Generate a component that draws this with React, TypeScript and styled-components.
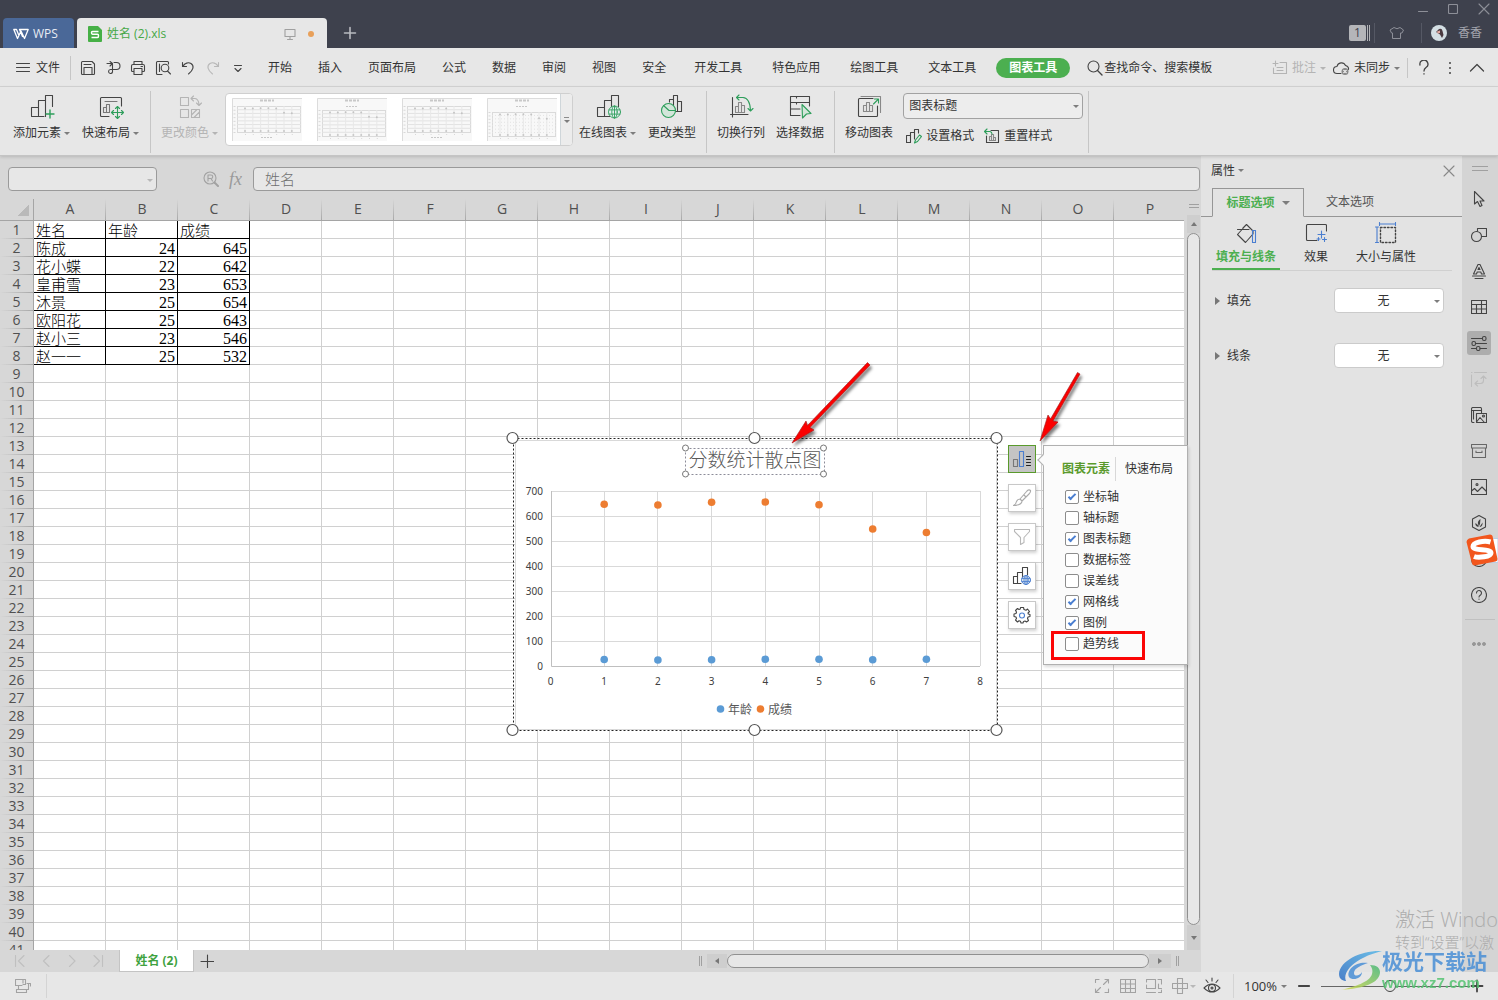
import React from "react";
import styled, { createGlobalStyle, css } from "styled-components";

const ink = "#333333";
const green = "#4caf50";
const ui = `"Open Sans", "Noto Sans CJK SC", sans-serif`;

const Global = createGlobalStyle`
  *, *::before, *::after { box-sizing: border-box; }
  body { margin: 0; background: #e7e7e7; font-family: ${ui}; font-size: 12px; line-height: 16px; color: ${ink}; }
  button, input, select { font: inherit; color: inherit; margin: 0; padding: 0; }
  button { background: none; border: 0; white-space: nowrap; cursor: pointer; }
  svg { display: block; flex: none; }
`;

/* ---------- shared pieces ---------- */

const App = styled.div`
  position: relative;
  display: flex;
  flex-direction: column;
  height: 100vh;
  overflow: hidden;
`;

const Spacer = styled.div`
  flex: 1;
`;

const Caret = styled.i<{ $color?: string; $size?: number }>`
  flex: none;
  width: 0;
  height: 0;
  border: ${(p) => p.$size ?? 3}px solid transparent;
  border-bottom-width: 0;
  border-top-color: ${(p) => p.$color ?? "#7d7d7d"};
`;

const VLine = styled.span<{ $h: number; $color?: string }>`
  flex: none;
  width: 1px;
  height: ${(p) => p.$h}px;
  background: ${(p) => p.$color ?? "#c6c6c6"};
`;

type IconProps = {
  w?: number;
  h?: number;
  color?: string;
  children: React.ReactNode;
};

function Icon({ w = 16, h = 16, color = "#444", children }: IconProps) {
  return (
    <svg
      width={w}
      height={h}
      viewBox={`0 0 ${w} ${h}`}
      fill="none"
      stroke={color}
      strokeWidth="1.1"
      strokeLinecap="round"
      strokeLinejoin="round"
      aria-hidden="true"
    >
      {children}
    </svg>
  );
}

/* ---------- title bar ---------- */

const TitleBar = styled.header`
  flex: none;
  display: flex;
  align-items: flex-end;
  height: 48px;
  padding-left: 3px;
  background: #3e414d;
`;

const HomeTab = styled.button`
  display: flex;
  align-items: center;
  gap: 4px;
  width: 71px;
  height: 30px;
  padding: 2px 0 0 10px;
  border-radius: 4px 4px 0 0;
  background: #4a6898;
  color: #e8ecf4;
`;

const DocTab = styled.div`
  display: flex;
  align-items: center;
  width: 250px;
  height: 30px;
  margin-left: 3px;
  padding: 2px 13px 0 11px;
  border-radius: 4px 4px 0 0;
  background: #e7e7e7;
  color: #46a846;
`;

const DocName = styled.span`
  margin-left: 5px;
`;

const UnsavedDot = styled.span`
  width: 6px;
  height: 6px;
  margin-left: 12px;
  border-radius: 50%;
  background: #e8a05a;
`;

const NewTab = styled.button`
  display: grid;
  place-items: center;
  width: 46px;
  height: 30px;
`;

const TitleRight = styled.div`
  align-self: stretch;
  display: flex;
  flex-direction: column;
  align-items: flex-end;
`;

const WindowButtons = styled.div`
  display: flex;
  align-items: center;
  gap: 20px;
  height: 18px;
  padding-right: 8px;
`;

const Account = styled.div`
  display: flex;
  align-items: center;
  height: 29px;
  padding-right: 16px;
  color: #a3a5ad;
`;

const CountBadge = styled.span`
  width: 17px;
  margin-right: 1px;
  border-radius: 2px;
  background: #b4b5b9;
  color: #3e414d;
  text-align: center;
`;

const BadgeStripes = styled.span`
  width: 3px;
  height: 16px;
  margin-right: 4px;
  border: solid #b4b5b9;
  border-width: 0 1px;
`;

/* ---------- menu bar ---------- */

const MenuBar = styled.nav`
  flex: none;
  display: flex;
  align-items: center;
  height: 39px;
  padding-top: 2px;
  border-bottom: 1px solid #d4d4d4;
  background: #e7e7e7;
`;

const FileButton = styled.button`
  display: flex;
  align-items: center;
  gap: 6px;
  height: 24px;
  margin: 0 10px 0 16px;
`;

const QuickTools = styled.div`
  display: flex;
  align-items: center;
  gap: 9px;
  margin: 0 22px 0 9px;
`;

const MenuGroup = styled.div<{ $gap: number; $after: number }>`
  display: flex;
  gap: ${(p) => p.$gap}px;
  margin-right: ${(p) => p.$after}px;
`;

const ActiveMenu = styled.button`
  height: 20px;
  margin-right: 17px;
  padding: 0 13px;
  border-radius: 10px;
  background: ${green};
  color: #fff;
  font-weight: 700;
`;

const MenuAction = styled.button<{ $dim?: boolean; $gap?: number }>`
  display: flex;
  align-items: center;
  gap: ${(p) => p.$gap ?? 4}px;
  color: ${(p) => (p.$dim ? "#b4b4b4" : ink)};
`;

const MenuRight = styled.div`
  display: flex;
  align-items: center;
  gap: 7px;
  margin-left: auto;
  padding-right: 13px;
`;

const MenuEndIcons = styled.div`
  display: flex;
  align-items: center;
  gap: 12px;
  padding-left: 2px;
`;

/* ---------- ribbon ---------- */

const Ribbon = styled.section`
  position: relative;
  z-index: 1;
  flex: none;
  display: flex;
  align-items: flex-start;
  height: 69px;
  padding: 6px 0 0 13px;
  border-bottom: 1px solid #c4c4c4;
  box-shadow: 0 1px 3px rgba(0, 0, 0, 0.15);
  background: #e7e7e7;
`;

const RibbonLine = styled(VLine)`
  margin-top: -2px;
`;

const Tools = styled.div<{ $l?: number; $r?: number; $gap?: number }>`
  display: flex;
  gap: ${(p) => p.$gap ?? 11}px;
  margin: 0 ${(p) => p.$r ?? 10}px 0 ${(p) => p.$l ?? 10}px;
`;

const Tool = styled.button<{ $dim?: boolean }>`
  display: flex;
  flex-direction: column;
  align-items: center;
  gap: 6px;
  color: ${(p) => (p.$dim ? "#b4b4b4" : ink)};
`;

const ToolLabel = styled.span`
  display: flex;
  align-items: center;
  gap: 3px;
`;

const Gallery = styled.div`
  display: flex;
  width: 348px;
  height: 53px;
  border: 1px solid #cfcfcf;
  border-radius: 4px;
  background: #fff;
  overflow: hidden;
`;

const Thumbs = styled.div`
  flex: 1;
  display: flex;
  gap: 15px;
  padding: 4px 0 0 6px;
  overflow: hidden;
`;

const GalleryMore = styled.button`
  display: grid;
  place-content: center;
  justify-items: center;
  gap: 2px;
  width: 12px;
  border-left: 1px solid #cfd6da;
  background: #ececec;
`;

const MoreBar = styled.i`
  width: 5px;
  height: 1px;
  background: #8c8c8c;
`;

const FormatGroup = styled.div`
  display: flex;
  flex-direction: column;
  gap: 9px;
  width: 180px;
  margin-right: 5px;
`;

const FormatRow = styled.div`
  display: flex;
  gap: 10px;
  padding-left: 3px;
`;

const SmallTool = styled.button`
  display: flex;
  align-items: center;
  gap: 4px;
`;

/* ---------- select ---------- */

const SelectWrap = styled.div`
  position: relative;
  display: flex;
  width: 100%;
`;

const SelectBox = styled.select<{ $center?: boolean }>`
  appearance: none;
  width: 100%;
  height: 26px;
  padding: 0 16px 0 5px;
  border: 1px solid #a2a2a2;
  border-radius: 4px;
  background: #ededed;
  ${(p) =>
    p.$center &&
    css`
      height: 25px;
      border-color: #cbcbcb;
      background: #fff;
      text-align-last: center;
    `}
`;

const SelectCaret = styled(Caret)`
  position: absolute;
  top: 12px;
  right: 4px;
`;

function Select({ value, label, center }: { value: string; label: string; center?: boolean }) {
  return (
    <SelectWrap>
      <SelectBox $center={center} aria-label={label} defaultValue={value}>
        <option>{value}</option>
      </SelectBox>
      <SelectCaret />
    </SelectWrap>
  );
}

/* ---------- work area ---------- */

const Work = styled.div`
  flex: 1;
  display: flex;
  min-height: 0;
`;

const Main = styled.main`
  flex: 1;
  display: flex;
  flex-direction: column;
  min-width: 0;
  background: #d7d7d7;
`;

const FormulaBar = styled.div`
  flex: none;
  display: flex;
  align-items: center;
  height: 43px;
  padding: 3px 1px 0 8px;
`;

const fieldStyle = css`
  height: 24px;
  border: 1px solid #9a9a9a;
  border-radius: 4px;
  background: #e7e7e7;
`;

const NameBox = styled.div`
  position: relative;
  width: 149px;
  margin-right: 46px;
`;

const NameInput = styled.input`
  ${fieldStyle}
  display: block;
  width: 100%;
  padding: 0 16px 0 8px;
`;

const FormulaIcons = styled.div`
  display: flex;
  align-items: center;
  gap: 10px;
  width: 50px;
  font: italic 18px/20px "Liberation Serif", serif;
  color: #9a9a9a;
`;

const FormulaInput = styled.input`
  ${fieldStyle}
  flex: 1;
  min-width: 0;
  padding: 0 11px 2px;
  color: #6f6f6f;
  font-size: 15px;
  font-weight: 300;
`;

const SheetArea = styled.div`
  position: relative;
  flex: 1;
  display: flex;
  min-height: 0;
`;

const SheetClip = styled.div`
  flex: 1;
  min-width: 0;
  overflow: hidden;
  background: #fff;
`;

const Grid = styled.table`
  width: 1186px;
  table-layout: fixed;
  border-spacing: 0;
`;

const Corner = styled.th`
  width: 34px;
  height: 22px;
  padding: 0;
  border-bottom: 1px solid #a5a5a5;
  border-right: 1px solid #a5a5a5;
  background: linear-gradient(135deg, #d7d7d7 50%, #b9b9b9 50%) 17px 6px / 12px 11px no-repeat, #d7d7d7;
`;

const headText = css`
  font-size: 14px;
  line-height: 15px;
  font-weight: 400;
  color: #505050;
`;

const ColHead = styled.th`
  width: 72px;
  height: 22px;
  padding: 0 0 2px;
  border-bottom: 1px solid #a5a5a5;
  background: linear-gradient(#d7d7d7, #a8a8a8) right / 1px 100% no-repeat, #d7d7d7;
  ${headText}
`;

const RowHead = styled.th`
  height: 18px;
  padding: 0 0 2px;
  border-right: 1px solid #a5a5a5;
  background: linear-gradient(90deg, #d7d7d7, #a8a8a8) bottom / 100% 1px no-repeat, #d7d7d7;
  ${headText}
`;

const Cell = styled.td<{ $data?: boolean; $num?: boolean }>`
  height: 18px;
  padding: 0 2px;
  border: solid ${(p) => (p.$data ? "#000" : "#d0d0d0")};
  border-width: 0 1px 1px 0;
  color: #000;
  white-space: nowrap;
  font-family: "Noto Sans CJK SC", sans-serif;
  font-size: 15px;
  font-weight: 300;
  line-height: 17px;
  ${(p) =>
    p.$num &&
    css`
      padding-top: 2px;
      font-family: "Liberation Serif", serif;
      font-size: 16px;
      line-height: 15px;
      text-align: right;
    `}
`;

const VScroll = styled.div`
  flex: none;
  display: flex;
  flex-direction: column;
  align-items: center;
  width: 17px;
  padding: 5px 1px 0 3px;
`;

const Grip = styled.span<{ $w: number; $h: number }>`
  flex: none;
  width: ${(p) => p.$w}px;
  height: ${(p) => p.$h}px;
  border: solid #a0a0a0;
  border-width: ${(p) => (p.$w > p.$h ? "1px 0" : "0 1px")};
`;

const ScrollEnd = styled.button<{ $w: number; $h: number }>`
  flex: none;
  display: grid;
  place-items: center;
  width: ${(p) => p.$w}px;
  height: ${(p) => p.$h}px;
  background: #cecece;
`;

const Arrow = styled.i<{ $turn: number }>`
  border: 3px solid transparent;
  border-bottom: 0;
  border-top: 4px solid #777;
  rotate: ${(p) => p.$turn}deg;
`;

const VTrackTop = styled.div`
  margin-top: 7px;
`;

const Thumb = styled.div`
  flex: 1;
  align-self: stretch;
  border: 1px solid #909090;
  border-radius: 8px;
  background: #e7e7e7;
`;

const SheetTabs = styled.div`
  flex: none;
  display: flex;
  align-items: center;
  height: 22px;
`;

const SheetNav = styled.div`
  display: flex;
  gap: 14px;
  padding: 0 15px 0 14px;
`;

const SheetTab = styled.button`
  align-self: stretch;
  width: 75px;
  padding-top: 1px;
  border: solid #c4c4c4;
  border-width: 0 1px 1px;
  background: #fff;
  color: #3fa23f;
  font-weight: 700;
`;

const AddSheet = styled.button`
  padding: 0 6px;
`;

const HScroll = styled.div`
  display: flex;
  align-items: center;
  width: 480px;
  margin-right: 22px;
`;

const HThumb = styled.div`
  flex: 1;
  height: 14px;
  border: 1px solid #909090;
  border-radius: 7px;
  background: #e7e7e7;
`;

const HGripBox = styled.div<{ $side: "left" | "right" }>`
  padding-${(p) => (p.$side === "left" ? "right" : "left")}: 5px;
`;

/* ---------- objects floating on the sheet ---------- */

const ChartObject = styled.div`
  position: absolute;
  left: 505px;
  top: 231px;
`;

const SideTools = styled.div`
  position: absolute;
  left: 1008px;
  top: 246px;
  display: flex;
  flex-direction: column;
  gap: 11px;
`;

const SideTool = styled.button<{ $on?: boolean }>`
  display: grid;
  place-items: center;
  width: 28px;
  height: 28px;
  border: 1px solid ${(p) => (p.$on ? "#5a9a2c" : "#c8c8c8")};
  background: ${(p) => (p.$on ? "#c4c4c4" : "#fff")};
  box-shadow: ${(p) => (p.$on ? "none" : "1px 2px 3px rgba(0, 0, 0, 0.18)")};
`;

const Popup = styled.div`
  position: absolute;
  left: 1043px;
  top: 246px;
  z-index: 2;
  width: 145px;
  padding: 11px 0 10px;
  border: 1px solid #b0b0b0;
  background: #fbfbfb;
  box-shadow: 1px 2px 3px rgba(0, 0, 0, 0.15);
  &::before {
    content: "";
    position: absolute;
    left: -5px;
    top: 10px;
    width: 8px;
    height: 8px;
    border: solid #b0b0b0;
    border-width: 0 0 1px 1px;
    background: #fbfbfb;
    rotate: 45deg;
  }
`;

const PopupTabs = styled.div`
  display: flex;
  align-items: center;
  gap: 5px;
  height: 24px;
  margin-bottom: 5px;
  padding-left: 18px;
`;

const PopupTab = styled.button<{ $on?: boolean }>`
  padding-left: ${(p) => (p.$on ? 0 : 4)}px;
  color: ${(p) => (p.$on ? "#5a9a2c" : ink)};
  font-weight: ${(p) => (p.$on ? 700 : 400)};
`;

const CheckRow = styled.label`
  position: relative;
  display: flex;
  align-items: center;
  gap: 4px;
  height: 21px;
  padding-left: 21px;
`;

const Check = styled.input`
  appearance: none;
  position: relative;
  width: 14px;
  height: 14px;
  border: 1px solid #8c8c8c;
  border-radius: 2px;
  background: #fff;
  &:checked::after {
    content: "";
    position: absolute;
    left: 4px;
    top: 1px;
    width: 4px;
    height: 8px;
    border: solid #4a7ed0;
    border-width: 0 2px 2px 0;
    rotate: 45deg;
  }
`;

const RedBox = styled.span`
  position: absolute;
  left: 7px;
  top: -2px;
  width: 94px;
  height: 29px;
  border: 3px solid #fb0505;
`;

const Arrows = styled.div`
  position: absolute;
  left: 780px;
  top: 156px;
  z-index: 3;
  pointer-events: none;
`;

/* ---------- properties panel ---------- */

const Panel = styled.aside`
  flex: none;
  display: flex;
  flex-direction: column;
  width: 261px;
  background: #e3e3e3;
`;

const PanelTitle = styled.div`
  display: flex;
  align-items: center;
  justify-content: space-between;
  height: 32px;
  padding: 0 7px 3px 10px;
`;

const PanelTitleButton = styled.button`
  display: flex;
  align-items: center;
  gap: 3px;
`;

const PanelTabs = styled.div`
  display: flex;
  height: 29px;
  &::before,
  &::after {
    content: "";
    width: 11px;
    border-bottom: 1px solid #969696;
  }
  &::after {
    flex: 1;
  }
`;

const PanelTab = styled.button<{ $on?: boolean }>`
  display: flex;
  align-items: center;
  justify-content: center;
  gap: 7px;
  width: 92px;
  color: #555;
  border-bottom: 1px solid #969696;
  ${(p) =>
    p.$on &&
    css`
      border: 1px solid #969696;
      border-bottom-color: transparent;
      color: ${green};
      font-weight: 700;
    `}
`;

const SubTabs = styled.div`
  display: flex;
  gap: 14px;
  margin: 0 10px 17px 11px;
  border-bottom: 1px solid #d0d0d0;
`;

const SubTab = styled.button<{ $on?: boolean; $w: number }>`
  display: flex;
  flex-direction: column;
  align-items: center;
  gap: 5px;
  width: ${(p) => p.$w}px;
  height: 53px;
  padding-top: 5px;
  ${(p) =>
    p.$on &&
    css`
      color: ${green};
      font-weight: 700;
      border-bottom: 2px solid ${green};
    `}
`;

const PropRow = styled.div`
  display: grid;
  grid-template-columns: 1fr 110px;
  align-items: center;
  height: 25px;
  margin-bottom: 30px;
  padding: 0 18px 0 14px;
`;

const PropName = styled.button`
  display: flex;
  align-items: center;
  gap: 7px;
`;

const Expander = styled.i`
  border: 4px solid transparent;
  border-left: 5px solid #777;
  border-right: 0;
`;

/* ---------- icon rail ---------- */

const Rail = styled.aside`
  position: relative;
  flex: none;
  display: flex;
  flex-direction: column;
  align-items: center;
  gap: 12px;
  width: 36px;
  padding-top: 10px;
  background: #d4d4d4;
`;

const RailList = styled.div`
  display: flex;
  flex-direction: column;
  gap: 12px;
  margin: 4px 2px 0 0;
`;

const RailButton = styled.button<{ $on?: boolean }>`
  display: grid;
  place-items: center;
  width: 24px;
  height: 24px;
  border-radius: 3px;
  background: ${(p) => (p.$on ? "#adadad" : "none")};
`;

const RailMore = styled.button`
  padding: 6px 2px 0 0;
`;

const RailLine = styled.span`
  width: 30px;
  height: 1px;
  background: #c0c0c0;
`;

const InputBadge = styled.div`
  position: absolute;
  right: 0;
  top: 378px;
`;

/* ---------- status bar ---------- */

const StatusBar = styled.footer`
  flex: none;
  display: flex;
  align-items: center;
  height: 28px;
  padding: 0 14px 0 15px;
  background: #e7e7e7;
`;

const StatusLeft = styled.div`
  display: flex;
  align-items: center;
  gap: 15px;
`;

const ViewModes = styled.div`
  display: flex;
  align-items: center;
  gap: 10px;
  margin-right: 12px;
`;

const EyeButton = styled.button`
  margin-left: -3px;
`;

const Zoom = styled.button`
  display: flex;
  align-items: center;
  gap: 4px;
  margin: 0 11px 0 10px;
  font-size: 13px;
`;

const ZoomSlider = styled.input`
  appearance: none;
  width: 149px;
  height: 14px;
  margin: 0 0 0 11px;
  background: linear-gradient(#666, #666) center / 100% 1px no-repeat;
  &::-webkit-slider-thumb {
    appearance: none;
    width: 12px;
    height: 12px;
    border: 1px solid #444;
    border-radius: 50%;
    background: #e7e7e7;
  }
`;

/* ---------- notices over the corner ---------- */

const Activation = styled.div`
  position: absolute;
  right: 0;
  bottom: 49px;
  z-index: 4;
  width: 103px;
  overflow: hidden;
  white-space: nowrap;
  color: #adadad;
  font-weight: 300;
  font-size: 20px;
  line-height: 28px;
  pointer-events: none;
`;

const ActivationHint = styled.div`
  font-size: 15px;
  line-height: 17px;
`;

const SiteMark = styled.div`
  position: absolute;
  right: 11px;
  bottom: 8px;
  z-index: 5;
  display: flex;
  align-items: center;
  opacity: 0.85;
  pointer-events: none;
`;

const SiteName = styled.div`
  color: #4a8fd6;
  font-family: "Noto Sans CJK SC", sans-serif;
  font-size: 21px;
  line-height: 20px;
  font-weight: 700;
`;

const SiteUrl = styled.div`
  padding-top: 4px;
  color: #55c472;
  font: 700 15px/18px "Liberation Sans", sans-serif;
`;

/* ---------- drawings ---------- */

const G = "#2e9e5b";

const IconBars = ({ children }: { children?: React.ReactNode }) => (
  <Icon w={26} h={26}>
    <path d="M2.5 22.5V14.5H9.5V22.5M2.5 23.5H15M9.5 14V7.5H16.5V23.5M16.5 8V2.5H23.5V13.5" />
    {children}
  </Icon>
);

const Globe = ({ x, y, r, color }: { x: number; y: number; r: number; color: string }) => (
  <g stroke={color} strokeWidth="0.9">
    <circle cx={x} cy={y} r={r} fill="#e6eef0" />
    <ellipse cx={x} cy={y} rx={r * 0.45} ry={r} />
    <path d={`M${x} ${y - r}V${y + r}M${x - r * 0.9} ${y - r * 0.35}H${x + r * 0.9}M${x - r * 0.9} ${y + r * 0.35}H${x + r * 0.9}`} />
  </g>
);

const miniHigh = [0.06, 0.06, 0.05, 0.05, 0.06, 0.22, 0.24];

function MiniChart({ top, sub, dots }: { top: number; sub?: boolean; dots?: boolean }) {
  const bottom = sub ? 38 : 34;
  const height = bottom - top;
  return (
    <svg width="70" height="43" viewBox="0 0 70 43" aria-hidden="true">
      <rect width="70" height="43" fill="#f8f8f8" />
      <path d="M0.5 43V0.5H70" stroke="#dcdcdc" fill="none" />
      <path d="M28 2.5H42" stroke="#c8c8c8" strokeWidth="2" strokeDasharray="3 1" />
      {sub && <path d="M29 8.5H41" stroke="#c8c8c8" strokeDasharray="2 1" />}
      {!sub && <path d="M29 39.5H41" stroke="#c8c8c8" strokeDasharray="2 1" />}
      <rect x="5.5" y={top + 0.5} width="63" height={height} fill="none" stroke="#dadada" />
      {[1, 2, 3, 4, 5, 6].map((n) => (
        <path key={n} d={`M5 ${top + (height * n) / 7}H69`} stroke="#e2e2e2" strokeDasharray={dots ? "1 2" : undefined} />
      ))}
      {miniHigh.map((v, n) => {
        const x = 13 + n * 7.8;
        return (
          <g key={n}>
            <path d={`M${x} ${top}V${bottom}`} stroke="#e8e8e8" />
            <circle cx={x} cy={top + 1 + v * height} r="1" fill="#c4c4c4" />
            <circle cx={x} cy={bottom - 1} r="1" fill="#c8c8c8" />
            <path d={`M${x} ${bottom + 2.5}h1`} stroke="#d8d8d8" />
          </g>
        );
      })}
      {[0, 1, 2, 3, 4, 5, 6, 7].map((n) => (
        <path key={n} d={`M1.5 ${top + 0.5 + (height * n) / 7}h2`} stroke="#d8d8d8" />
      ))}
    </svg>
  );
}

const ages = [24, 22, 23, 25, 25, 23, 25];
const scores = [645, 642, 653, 654, 643, 546, 532];

function ScatterChart() {
  const px = (n: number) => 550.5 + n * 53.7;
  const py = (v: number) => 666.5 - v / 4;
  const dot = (v: number) => py(v) - 1;
  return (
    <svg width="500" height="308" viewBox="505 430 500 308" role="img" aria-label="分数统计散点图">
      <rect x="515.5" y="440.5" width="481" height="289" fill="#fff" stroke="#d9d9d9" />
      <rect x="513.5" y="438.5" width="484" height="292" fill="none" stroke="#222" strokeDasharray="2 2" />
      <g stroke="#d9d9d9">
        {[100, 200, 300, 400, 500, 600, 700].map((v) => (
          <path key={v} d={`M551 ${Math.floor(py(v)) + 0.5}H980`} />
        ))}
        {[1, 2, 3, 4, 5, 6, 7, 8].map((n) => (
          <path key={n} d={`M${Math.floor(px(n)) + 0.5} 491V666`} />
        ))}
      </g>
      <path d="M551.5 491V666.5H980" fill="none" stroke="#bfbfbf" />
      <g fontFamily={`"Noto Sans", sans-serif`} fontSize="10" fill="#404040">
        {[0, 100, 200, 300, 400, 500, 600, 700].map((v) => (
          <text key={v} x="543" y={py(v) + 3} textAnchor="end">
            {v}
          </text>
        ))}
        {[0, 1, 2, 3, 4, 5, 6, 7, 8].map((n) => (
          <text key={n} x={px(n)} y="685" textAnchor="middle">
            {n}
          </text>
        ))}
      </g>
      {scores.map((v, n) => (
        <circle key={n} cx={px(n + 1)} cy={dot(v)} r="3.8" fill="#ed7d31" />
      ))}
      {ages.map((v, n) => (
        <circle key={n} cx={px(n + 1)} cy={dot(v)} r="3.8" fill="#5b9bd5" />
      ))}
      <circle cx="720.5" cy="709" r="3.8" fill="#5b9bd5" />
      <circle cx="760.5" cy="709" r="3.8" fill="#ed7d31" />
      <g fontFamily={ui} fontSize="12" fill="#595959">
        <text x="728" y="714">年龄</text>
        <text x="768" y="714">成绩</text>
      </g>
      <rect x="685.5" y="448.5" width="139" height="26" fill="none" stroke="#8c8c99" strokeDasharray="2 2" />
      <text x="755" y="467" textAnchor="middle" fontFamily={`"Noto Sans CJK SC", sans-serif`} fontWeight="300" fontSize="19" fill="#595959">
        分数统计散点图
      </text>
      <g fill="#fff" stroke="#777">
        {[685.5, 823.5].map((x) => [448, 474].map((y) => <circle key={`${x}-${y}`} cx={x} cy={y} r="3" />))}
      </g>
      <g fill="#fff" stroke="#555" strokeWidth="1.2">
        {[512.5, 754.5, 996.5].map((x) => [438, 730].map((y) => <circle key={`${x}-${y}`} cx={x} cy={y} r="5.5" />))}
      </g>
    </svg>
  );
}

function RedArrows() {
  return (
    <svg width="310" height="100" viewBox="780 355 310 100" aria-hidden="true">
      <defs>
        <filter id="shade" x="-20%" y="-20%" width="150%" height="150%">
          <feDropShadow dx="2" dy="3" stdDeviation="1.5" floodOpacity="0.5" />
        </filter>
      </defs>
      <g filter="url(#shade)" fill="#fb0505" stroke="#9c1010" strokeWidth="0.6">
        <path d="M867.5 362.5L870 365L810 427.5L814 430L792 443L806 421L807.5 425.5Z" />
        <path d="M1077.5 372.5L1080 374L1053 421L1058 422L1040 441L1048 415L1050.5 419Z" />
      </g>
    </svg>
  );
}

/* ---------- data ---------- */

const columns = "ABCDEFGHIJKLMNOP".split("");
const names = ["陈成", "花小蝶", "皇甫雪", "沐景", "欧阳花", "赵小三", "赵一一"];
const records: (string | number)[][] = [["姓名", "年龄", "成绩"], ...names.map((n, i) => [n, ages[i], scores[i]])];
const rowNumbers = Array.from({ length: 41 }, (_, i) => i + 1);
const chartParts: [string, boolean][] = [
  ["坐标轴", true],
  ["轴标题", false],
  ["图表标题", true],
  ["数据标签", false],
  ["误差线", false],
  ["网格线", true],
  ["图例", true],
  ["趋势线", false],
];

const quickIcons: [string, React.ReactNode][] = [
  ["保存", <Icon><path d="M2.5 1.5H12L14.5 4V13.5Q14.5 14.5 13.5 14.5H2.5Q1.5 14.5 1.5 13.5V2.5Q1.5 1.5 2.5 1.5ZM4 14V7.5H12V14M4 4.5H11" /></Icon>],
  ["输出", <Icon><path d="M2 3.5H7M5 1.5L7.5 3.5L5 6M9 2.5H11.5A3.5 3.5 0 0 1 11.5 9.5H7.5V3.5M7.5 9.5V12A2 2 0 1 1 5.5 9.5H7.5" /></Icon>],
  ["打印", <Icon><path d="M4 4.5V1.5H12V4.5M4 11.5H2.5Q1.5 11.5 1.5 10.5V6Q1.5 4.5 3 4.5H13Q14.5 4.5 14.5 6V10.5Q14.5 11.5 13.5 11.5H12M4 8.5H12V14.5H4ZM11 6.5H12.5" /></Icon>],
  ["打印预览", <Icon><path d="M7 14.5H2.5Q1.5 14.5 1.5 13.5V2.5Q1.5 1.5 2.5 1.5H12.5Q13.5 1.5 13.5 2.5V4M4.5 4V11.5M12.5 11L15.5 14" /><circle cx="10" cy="8" r="3.8" /></Icon>],
  ["撤销", <Icon><path d="M2.5 2.5V6.5H6.5M2.5 6.5C5 3 8.5 2 11 3.5C14.5 6 13.5 10 8.5 14" /></Icon>],
  ["恢复", <Icon color="#b8b8b8"><path d="M13.5 2.5V6.5H9.5M13.5 6.5C11 3 7.5 2 5 3.5C1.5 6 2.5 10 7.5 14" /></Icon>],
  ["更多", <Icon><path d="M4.5 5.5H11.5M5 8.5L8 11.5L11 8.5" /></Icon>],
];

const railIcons: { name: string; on?: boolean; icon: React.ReactNode }[] = [
  { name: "选择", icon: <Icon><path d="M3.5 0.5V13L6.5 10.5L9 15.5L11 14.5L9 10H13Z" /></Icon> },
  { name: "形状", icon: <Icon><path d="M6.5 4V1.5H15.5V9.5H11" /><circle cx="5.5" cy="9.5" r="5" /></Icon> },
  { name: "艺术字", icon: <Icon><path d="M2.5 11L7 1.5H9L13.5 11H10.5L9.8 9H6.2L5.5 11ZM7 6.5H9L8 4.5ZM1.5 13H14.5M4 15.5H12" /></Icon> },
  { name: "表格", icon: <Icon><path d="M0.5 1.5H15.5V14.5H0.5ZM0.5 5.5H15.5M0.5 10H15.5M5.5 5.5V14.5M10.5 1.5V14.5" /></Icon> },
  { name: "属性", on: true, icon: <Icon><path d="M0.5 3.5H11M5 8.5H15.5M0.5 13.5H5M9 13.5H15.5" /><rect x="11.5" y="1.5" width="3.5" height="4" rx="1.5" /><rect x="1" y="6.5" width="3.5" height="4" rx="1.5" /><rect x="5.5" y="11.5" width="3.5" height="4" rx="1.5" /></Icon> },
  { name: "转换", icon: <Icon color="#bdbdbd"><path d="M0.5 4V15.5M3.5 1.5H15.5M0.5 1.5H1M4 12.5H9.5Q12.5 12.5 12.5 9.5V5.5M10 7.5L12.5 5L15 7.5M6.5 10L4 12.5L6.5 15" /></Icon> },
  { name: "素材", icon: <Icon><path d="M3 15.5H2Q0.5 15.5 0.5 14V2Q0.5 0.5 2 0.5H9.5Q10.5 0.5 10.5 2V3.5H0.5M10.5 3.5V5.5M2.5 3.5V12M5.5 6.5H15.5V15.5H5.5ZM5.5 15L9 10.5L13 15" /><circle cx="12.5" cy="9" r="1" /></Icon> },
  { name: "存档", icon: <Icon color="#666"><path d="M0.5 1.5H15.5V5H0.5ZM1.5 5V14.5H14.5V5M5 8V9.5H11V8" /></Icon> },
  { name: "图片", icon: <Icon><path d="M0.5 0.5H15.5V15.5H0.5ZM0.5 12L3.5 9.5L6.5 12.5L11 8L15.5 12.5" /><circle cx="6" cy="5.5" r="1" /></Icon> },
  { name: "会员", icon: <Icon><path d="M8 0.5L14.5 4V12L8 15.5L1.5 12V4Z" /><path d="M7.5 12C5 11.5 4 10 4.5 8L7.5 10.5ZM7 9C6.5 7 7.5 5 9.5 4L9 9L8 11ZM8.5 12L11.5 7.5C12 10 10.5 12 8.5 12Z" fill="#444" stroke="none" /></Icon> },
  { name: "定位", icon: <Icon><circle cx="8" cy="8" r="7.5" /></Icon> },
  { name: "帮助", icon: <Icon><circle cx="8" cy="8" r="7.5" /><path d="M5.5 6A2.5 2.5 0 1 1 9.5 8Q8 9 8 10M8 12V12.3" /></Icon> },
];

/* ---------- page ---------- */

export default function WpsSpreadsheet() {
  return (
    <App>
      <Global />
      <TitleBar>
        <HomeTab>
          <Icon w={16} h={12} color="#fff">
            <path strokeWidth="1.3" d="M5.5 6.5L3.5 1.5H0.8L4.5 10.5L8 3L11.5 10.5L15.2 1.5H6.5L9.5 8.5" />
          </Icon>
          WPS
        </HomeTab>
        <DocTab>
          <svg width="14" height="16" viewBox="0 0 14 16" aria-hidden="true">
            <path d="M1 0H10L14 4V15Q14 16 13 16H1Q0 16 0 15V1Q0 0 1 0Z" fill="#46b046" />
            <path d="M10.5 5.5H4.5Q3.5 5.5 3.5 6.8Q3.5 8.2 4.5 8.2H9.5Q10.5 8.2 10.5 9.7Q10.5 11.5 9.5 11.5H3.5" fill="none" stroke="#fff" strokeWidth="1.5" />
          </svg>
          <DocName>姓名 (2).xls</DocName>
          <Spacer />
          <Icon w={12} h={12} color="#a0a0a0">
            <path d="M1 1.5H11V8.5H1ZM6 8.5V11.5M3.5 11.5H8.5" />
          </Icon>
          <UnsavedDot />
        </DocTab>
        <NewTab aria-label="新建">
          <Icon w={14} h={14} color="#b8bac0">
            <path strokeWidth="1.6" d="M7 1.5V12.5M1.5 7H12.5" />
          </Icon>
        </NewTab>
        <Spacer />
        <TitleRight>
          <WindowButtons>
            <button aria-label="最小化"><Icon w={10} h={12} color="#8d8f98"><path d="M0.5 8.5H9.5" /></Icon></button>
            <button aria-label="最大化"><Icon w={10} h={10} color="#8d8f98"><rect x="0.5" y="0.5" width="9" height="9" rx="1" /></Icon></button>
            <button aria-label="关闭"><Icon w={12} h={12} color="#8d8f98"><path d="M1 1L11 11M11 1L1 11" /></Icon></button>
          </WindowButtons>
          <Account>
            <CountBadge>1</CountBadge>
            <BadgeStripes />
            <VLine $h={20} $color="#555864" />
            <svg width="46" height="16" viewBox="0 0 46 16" fill="none" stroke="#8d8f98" aria-hidden="true">
              <path d="M19 2.5Q22 5 25 2.5L28.5 5L27 8H25.5V13.5H17.5V8H16.5L15 5Z" />
            </svg>
            <VLine $h={20} $color="#555864" />
            <svg width="36" height="18" viewBox="0 0 36 18" aria-hidden="true">
              <circle cx="17" cy="9" r="8" fill="#d3dee3" />
              <path d="M14 8L17 5Q20 4 20.5 7L21.5 11L20 14L18 10.5Z" fill="#4a3a40" />
              <path d="M15 7.5L18 6.5L18 9L15.5 9.5Z" fill="#e0a8a0" />
            </svg>
            香香
          </Account>
        </TitleRight>
      </TitleBar>

      <MenuBar>
        <FileButton>
          <Icon w={14} h={12}><path d="M0.5 1.5H13.5M0.5 5.5H13.5M0.5 9.5H13.5" /></Icon>
          文件
        </FileButton>
        <VLine $h={24} />
        <QuickTools>
          {quickIcons.map(([name, icon]) => (
            <button key={name} aria-label={name}>{icon}</button>
          ))}
        </QuickTools>
        <MenuGroup $gap={26} $after={28}>
          {["开始", "插入", "页面布局", "公式", "数据", "审阅", "视图", "安全"].map((m) => <button key={m}>{m}</button>)}
        </MenuGroup>
        <MenuGroup $gap={30} $after={20}>
          {["开发工具", "特色应用", "绘图工具", "文本工具"].map((m) => <button key={m}>{m}</button>)}
        </MenuGroup>
        <ActiveMenu>图表工具</ActiveMenu>
        <MenuAction $gap={1}>
          <Icon><circle cx="6.5" cy="6.5" r="5.5" /><path strokeWidth="1.4" d="M10.5 10.5L15 15" /></Icon>
          查找命令、搜索模板
        </MenuAction>
        <MenuRight>
          <MenuAction $dim>
            <Icon color="#b4b4b4"><path d="M1 3.5H6M3.5 1V6M8 2.5H14.5V13.5H1.5V8M5 7.5H11M5 10.5H11" /></Icon>
            批注
            <Caret $color="#b4b4b4" />
          </MenuAction>
          <MenuAction>
            <Icon w={17}><path d="M8 13.5H4A3.5 3.5 0 0 1 4 6.5A4.5 4.5 0 0 1 12.5 5.5Q16 6.5 15.5 9.5" /><circle cx="12" cy="11.5" r="3.5" fill="#888" stroke="none" /><path stroke="#fff" d="M10.8 10.3L13.2 12.7M13.2 10.3L10.8 12.7" /></Icon>
            未同步
            <Caret />
          </MenuAction>
          <VLine $h={20} />
          <MenuEndIcons>
            <button aria-label="帮助"><Icon w={14} h={16}><path strokeWidth="1.3" d="M3 5A4 4 0 1 1 9 7.5Q7 9 7 11M7 13.7V14" /></Icon></button>
            <button aria-label="更多选项"><Icon w={14} h={16}><path strokeWidth="2" d="M7 3V3.1M7 8V8.1M7 13V13.1" /></Icon></button>
            <button aria-label="收起功能区"><Icon w={16} h={16}><path strokeWidth="1.3" d="M1.5 11L8 4.5L14.5 11" /></Icon></button>
          </MenuEndIcons>
        </MenuRight>
      </MenuBar>

      <Ribbon>
        <Tools $l={0} $r={11} $gap={12}>
          <Tool>
            <IconBars><path stroke={G} strokeWidth="1.4" d="M21 17V25M17 21H25" /></IconBars>
            <ToolLabel>添加元素 <Caret /></ToolLabel>
          </Tool>
          <Tool>
            <Icon w={26} h={26}>
              <path d="M11 23.5H3.5Q2.5 23.5 2.5 22.5V5.5Q2.5 4.5 3.5 4.5H22.5Q23.5 4.5 23.5 5.5V13" />
              <path stroke="#777" d="M7 8.5H19M5.5 19.5V14.5H8.5V19.5ZM8.5 19.5V11.5H11.5V19.5Z" />
              <path stroke={G} d="M19.5 13.5V25.5M13.5 19.5H25.5M17.5 15.5L19.5 13.5L21.5 15.5M17.5 23.5L19.5 25.5L21.5 23.5M15.5 17.5L13.5 19.5L15.5 21.5M23.5 17.5L25.5 19.5L23.5 21.5" />
            </Icon>
            <ToolLabel>快速布局 <Caret /></ToolLabel>
          </Tool>
        </Tools>
        <RibbonLine $h={62} />
        <Tools $r={7}>
          <Tool $dim>
            <Icon w={26} h={26} color="#b4b4b4">
              <path d="M3.5 4.5H11.5V12.5H3.5ZM3.5 16.5H11.5V24.5H3.5ZM14.5 16.5H22.5V24.5H14.5ZM14.5 22L20 16.5M17 24.5L22.5 19M14.5 5.5H18Q21.5 6 22 11.5M16.5 3L14 5.5L16.5 8M19.5 10L22 12.5L24.5 10" />
            </Icon>
            <ToolLabel>更改颜色 <Caret $color="#b4b4b4" /></ToolLabel>
          </Tool>
        </Tools>
        <Gallery>
          <Thumbs>
            <MiniChart top={8} />
            <MiniChart top={12} sub />
            <MiniChart top={8} />
            <MiniChart top={14} sub dots />
          </Thumbs>
          <GalleryMore aria-label="更多样式">
            <MoreBar />
            <Caret />
          </GalleryMore>
        </Gallery>
        <Tools $l={6} $gap={12}>
          <Tool>
            <IconBars><Globe x={19.5} y={19} r={6} color={G} /></IconBars>
            <ToolLabel>在线图表 <Caret /></ToolLabel>
          </Tool>
          <Tool>
            <Icon w={26} h={26}>
              <path d="M10.5 9V6.5H14.5V18M14.5 6V2.5H18.5V18M18.5 8.5H22.5V18.5H16" />
              <circle cx="9.5" cy="17.5" r="7" stroke={G} fill="#d3e6da" />
              <path stroke={G} d="M4.5 12.5L10 17.5H16.5" />
            </Icon>
            <ToolLabel>更改类型</ToolLabel>
          </Tool>
        </Tools>
        <RibbonLine $h={62} />
        <Tools>
          <Tool>
            <Icon w={26} h={26}>
              <path d="M4.5 4.5V24M2.5 21.5H20" />
              <path stroke="#888" d="M7.5 19.5V13.5H10.5V19.5ZM10.5 19.5V9.5H13.5V19.5ZM13.5 19.5V12.5H16.5V19.5Z" />
              <path stroke={G} d="M9 4.5H15Q22 5 22.5 17.5M11 2L8.5 4.5L11 7M20 15.5L22.5 18L25 15.5" />
            </Icon>
            <ToolLabel>切换行列</ToolLabel>
          </Tool>
          <Tool>
            <Icon w={26} h={26}>
              <path d="M13 22.5H3.5V3.5H22.5V13M3.5 9.5H22.5M3.5 16H13M9.5 9.5V11M9.5 3.5V5" />
              <path stroke={G} fill="#d3e6da" d="M15 11.5L24 20.5L19.5 21L15.5 25Z" />
            </Icon>
            <ToolLabel>选择数据</ToolLabel>
          </Tool>
        </Tools>
        <RibbonLine $h={62} />
        <Tools>
          <Tool>
            <Icon w={26} h={26}>
              <path d="M17 5.5H3.5Q2.5 5.5 2.5 6.5V22.5Q2.5 23.5 3.5 23.5H20.5Q21.5 23.5 21.5 22.5V13" />
              <path stroke="#888" d="M5 3.5H24.5V19.5M7.5 18.5V12.5H10.5V18.5ZM10.5 18.5V9.5H13.5V18.5ZM13.5 18.5V12.5H16.5V18.5Z" />
              <path stroke={G} d="M17.5 11L22 6.5M18.5 6H22.5V10" />
            </Icon>
            <ToolLabel>移动图表</ToolLabel>
          </Tool>
        </Tools>
        <FormatGroup>
          <Select value="图表标题" label="图表元素" />
          <FormatRow>
            <SmallTool>
              <Icon>
                <path d="M0.5 14.5V7.5H4.5V14.5H0.5M4.5 14.5V4.5H8.5V11M8.5 5V1.5H12.5V5" />
                <path stroke={G} d="M8.5 15L9.5 12L13.5 7L15.5 8.5L11.5 13.5Z" />
              </Icon>
              设置格式
            </SmallTool>
            <SmallTool>
              <Icon>
                <path d="M7 2.5H14.5V14.5H2.5V8" />
                <path stroke="#888" d="M5.5 12.5V8.5H7.5V12.5ZM7.5 12.5V6.5H9.5V12.5ZM9.5 12.5V9.5H11.5V12.5Z" />
                <path stroke={G} d="M1 3.5H6Q8 4 8 6M3 1L0.5 3.5L3 6" />
              </Icon>
              重置样式
            </SmallTool>
          </FormatRow>
        </FormatGroup>
        <RibbonLine $h={62} />
      </Ribbon>

      <Work>
        <Main>
          <FormulaBar>
            <NameBox>
              <NameInput aria-label="名称框" defaultValue="" />
              <SelectCaret $color="#b8b8b8" />
            </NameBox>
            <FormulaIcons>
              <Icon w={16} h={16} color="#a2a2a2">
                <circle cx="7" cy="7" r="6" />
                <path d="M5 10V4H8A1.7 1.7 0 0 1 8 7.5H5M8 7.5L9.5 10" />
                <path strokeWidth="2" d="M11.5 11.5L15 15" />
              </Icon>
              fx
            </FormulaIcons>
            <FormulaInput aria-label="编辑栏" defaultValue="姓名" />
          </FormulaBar>

          <SheetArea>
            <SheetClip>
              <Grid>
                <thead>
                  <tr>
                    <Corner aria-label="全选" />
                    {columns.map((c) => <ColHead key={c} scope="col">{c}</ColHead>)}
                  </tr>
                </thead>
                <tbody>
                  {rowNumbers.map((r) => (
                    <tr key={r}>
                      <RowHead scope="row">{r}</RowHead>
                      {columns.map((c, i) => {
                        const value = records[r - 1]?.[i];
                        return (
                          <Cell key={c} $data={value !== undefined} $num={typeof value === "number"}>
                            {value}
                          </Cell>
                        );
                      })}
                    </tr>
                  ))}
                </tbody>
              </Grid>
            </SheetClip>
            <VScroll>
              <Grip $w={10} $h={4} />
              <VTrackTop>
                <ScrollEnd $w={13} $h={18} aria-label="向上滚动"><Arrow $turn={180} /></ScrollEnd>
              </VTrackTop>
              <Thumb />
              <ScrollEnd $w={13} $h={25} aria-label="向下滚动"><Arrow $turn={0} /></ScrollEnd>
            </VScroll>

            <ChartObject><ScatterChart /></ChartObject>

            <SideTools>
              <SideTool $on aria-label="图表元素">
                <Icon w={20} h={20}>
                  <path stroke="#777" d="M1.5 10.5H5.5V17.5H1.5Z" />
                  <path stroke="#4a7ed0" d="M7.5 2.5H11.5V17.5H7.5Z" />
                  <path stroke="#222" d="M14.5 7.5H18.5M14.5 10.5H18.5M14.5 13.5H18.5M14.5 16.5H18.5" />
                </Icon>
              </SideTool>
              <SideTool aria-label="图表样式">
                <Icon w={20} h={20} color="#aaa">
                  <path d="M8 11L15 3Q17 1 18.5 2.5Q19 4 17 6L10 13ZM8 11L10 13Q10 17 1.5 17.5Q4 16.5 4.5 13.5Q5.5 11 8 11ZM12 7L14 9" />
                </Icon>
              </SideTool>
              <SideTool aria-label="筛选">
                <Icon w={20} h={20} color="#b8b8b8">
                  <path d="M2.5 2.5H17.5V4.5L12 10.5V15.5L8.5 17.5V10.5L2.5 4.5Z" />
                </Icon>
              </SideTool>
              <SideTool aria-label="在线图表">
                <Icon w={20} h={20}>
                  <path d="M1.5 17.5V10.5H5.5V17.5M1.5 17.5H9M5.5 10.5V6.5H10.5V16M10.5 7V1.5H15.5V9" />
                  <Globe x={14} y={14} r={4.5} color="#4a7ed0" />
                </Icon>
              </SideTool>
              <SideTool aria-label="设置">
                <Icon w={20} h={20}>
                  <path d="M8.5 2.5H11.5L12 4.5L14 5.3L15.5 4L17.5 6.5L16 8L16.3 9L18 9.5V11.5L16 12L15.5 13.5L16.5 15.5L14.5 17L13 16L11.5 16.5L11 18H9L8.5 16.3L7 15.8L5.5 17L3.5 15L4.5 13.5L4 12L2 11.5V9L4 8.5L4.5 7L3.5 5.5L5.5 3.5L7 4.5L8.3 4Z" />
                  <circle cx="10" cy="10.5" r="2.5" stroke="#4a7ed0" />
                </Icon>
              </SideTool>
            </SideTools>

            <Popup>
              <PopupTabs>
                <PopupTab $on>图表元素</PopupTab>
                <VLine $h={24} $color="#d8d8d8" />
                <PopupTab>快速布局</PopupTab>
              </PopupTabs>
              {chartParts.map(([name, on]) => (
                <CheckRow key={name}>
                  <Check type="checkbox" defaultChecked={on} />
                  {name}
                  {name === "趋势线" && <RedBox />}
                </CheckRow>
              ))}
            </Popup>

            <Arrows><RedArrows /></Arrows>
          </SheetArea>

          <SheetTabs>
            <SheetNav>
              <Icon w={12} h={12} color="#c0c0c0"><path d="M1.5 0.5V11.5M10 0.5L4.5 6L10 11.5" /></Icon>
              <Icon w={12} h={12} color="#c0c0c0"><path d="M9 0.5L3.5 6L9 11.5" /></Icon>
              <Icon w={12} h={12} color="#c0c0c0"><path d="M3.5 0.5L9 6L3.5 11.5" /></Icon>
              <Icon w={12} h={12} color="#c0c0c0"><path d="M10.5 0.5V11.5M2 0.5L7.5 6L2 11.5" /></Icon>
            </SheetNav>
            <SheetTab>姓名 (2)</SheetTab>
            <AddSheet aria-label="新建工作表">
              <Icon w={14} h={14}><path d="M7.5 1V14M1 7.5H14" /></Icon>
            </AddSheet>
            <Spacer />
            <HScroll>
              <HGripBox $side="left"><Grip $w={3} $h={10} as="div" /></HGripBox>
              <ScrollEnd $w={20} $h={14} aria-label="向左滚动"><Arrow $turn={90} /></ScrollEnd>
              <HThumb />
              <ScrollEnd $w={22} $h={14} aria-label="向右滚动"><Arrow $turn={-90} /></ScrollEnd>
              <HGripBox $side="right"><Grip $w={3} $h={10} as="div" /></HGripBox>
            </HScroll>
          </SheetTabs>
        </Main>

        <Panel>
          <PanelTitle>
            <PanelTitleButton>属性 <Caret /></PanelTitleButton>
            <button aria-label="关闭面板"><Icon w={12} h={12} color="#888"><path d="M1 1L11 11M11 1L1 11" /></Icon></button>
          </PanelTitle>
          <PanelTabs>
            <PanelTab $on>标题选项 <Caret $size={4} /></PanelTab>
            <PanelTab>文本选项</PanelTab>
          </PanelTabs>
          <SubTabs>
            <SubTab $on $w={68}>
              <Icon w={22} h={22}>
                <path d="M2.5 12.5L11.5 2.5L18 9V12L10.5 20.5ZM2.5 7.5H14M8 6L11.5 2.5" />
                <path stroke="#4a7ed0" d="M17.5 8.5H20.5V20.5H17.5Z" />
              </Icon>
              填充与线条
            </SubTab>
            <SubTab $w={44}>
              <Icon w={22} h={22}>
                <path d="M12 18.5H2.5Q1.5 18.5 1.5 17.5V3.5Q1.5 2.5 2.5 2.5H20.5Q21.5 2.5 21.5 3.5V9" />
                <path stroke="#4a7ed0" d="M16.5 9V16M13 12.5H20M13.5 15.5V18.5M12 17H15M19.5 15.5V19.5M17.5 17.5H21.5" />
              </Icon>
              效果
            </SubTab>
            <SubTab $w={68}>
              <Icon w={22} h={22}>
                <rect x="5.5" y="5.5" width="15" height="15" strokeDasharray="1.5 2" strokeWidth="1.4" />
                <path stroke="#4a7ed0" d="M4.5 2H20.5M4.5 0.5V3.5M20.5 0.5V3.5M2 5V20.5M0.5 5H3.5M0.5 20.5H3.5" />
              </Icon>
              大小与属性
            </SubTab>
          </SubTabs>
          {["填充", "线条"].map((name) => (
            <PropRow key={name}>
              <PropName><Expander />{name}</PropName>
              <Select value="无" label={name} center />
            </PropRow>
          ))}
        </Panel>

        <Rail>
          <Grip $w={16} $h={5} />
          <RailList>
            {railIcons.map((r) => (
              <RailButton key={r.name} $on={r.on} aria-label={r.name}>
                {r.icon}
              </RailButton>
            ))}
          </RailList>
          <RailLine />
          <RailMore aria-label="更多工具">
            <Icon w={16} h={12} color="#777"><circle cx="3" cy="6" r="1.2" /><circle cx="8" cy="6" r="1.2" /><circle cx="13" cy="6" r="1.2" /></Icon>
          </RailMore>
          <InputBadge>
            <svg width="33" height="32" viewBox="0 0 33 32" aria-hidden="true">
              <path d="M18 4.5H33V28.5H18" fill="#fff" stroke="#b9cfe8" />
              <path d="M4 4.5L25 0.5Q27 0.5 27.5 2L32.5 25Q32.5 27 30.5 27.5L9.5 31.5Q7.5 31.5 7 29.5L1.5 8Q1.5 5.5 4 4.5Z" fill="#f2561d" />
              <path d="M25.5 8C19 6 8 8.5 8 12.5C8 17.5 26 14 26 19C26 23 13 24 9 22.5" fill="none" stroke="#fff" strokeWidth="5" />
            </svg>
          </InputBadge>
        </Rail>
      </Work>

      <StatusBar>
        <StatusLeft>
          <Icon w={16} h={16} color="#a2a2a2">
            <path d="M8 1.5H0.5V7.5H7M8 1.5V5M10.5 1.5H8.5M10.5 1.5V6.5H8M3.5 8V11.5M1.5 11.5H11.5V14.5H1.5ZM11.5 11.5H13.5V5.5H15.5V8M12 5.5H13.5" />
          </Icon>
          <VLine $h={24} $color="#d4d4d4" />
        </StatusLeft>
        <Spacer />
        <ViewModes>
          <button aria-label="全屏"><Icon color="#a2a2a2"><path d="M1.5 4.5V1.5H5M11 1.5H14.5V5M14 2L9.5 6.5M1.5 11V14.5H5M2 14L6.5 9.5M14.5 11V14.5H11" /></Icon></button>
          <button aria-label="普通视图"><Icon color="#a2a2a2"><path d="M0.5 1.5H15.5V14.5H0.5ZM0.5 6H15.5M0.5 10.5H15.5M5.5 1.5V14.5M10.5 1.5V14.5" /></Icon></button>
          <button aria-label="分页预览"><Icon color="#a2a2a2"><path d="M0.5 4V1.5H9.5V10.5H0.5V7M12 1.5H15.5V6M12.5 6V10.5H15.5M0.5 14.5H9.5M12.5 14.5H15.5V12" /></Icon></button>
          <MenuAction $gap={2} aria-label="阅读模式"><Icon color="#a2a2a2"><path d="M5.5 0.5H10.5V15.5H5.5ZM0.5 5.5H15.5V10.5H0.5Z" /></Icon><Caret $color="#b8b8b8" /></MenuAction>
          <EyeButton aria-label="护眼模式"><Icon w={18} h={18}><path d="M1 11Q9 3 17 11Q9 19 1 11ZM9 1V4M3 3L5 5.5M15 3L13 5.5" /><circle cx="9" cy="11" r="3.5" /><circle cx="9" cy="11" r="1" /></Icon></EyeButton>
        </ViewModes>
        <VLine $h={24} $color="#d4d4d4" />
        <Zoom>100% <Caret /></Zoom>
        <button aria-label="缩小"><Icon w={12} h={12}><path strokeWidth="1.8" d="M0.8 6H11.2" /></Icon></button>
        <ZoomSlider type="range" aria-label="缩放" min="0" max="100" defaultValue="46" />
        <button aria-label="放大"><Icon w={14} h={14}><path strokeWidth="1.8" d="M7 1.5V12.5M1.5 7H12.5" /></Icon></button>
      </StatusBar>

      <Activation>
        激活 Windo
        <ActivationHint>转到“设置”以激</ActivationHint>
      </Activation>
      <SiteMark>
        <svg width="44" height="42" viewBox="0 0 44 42" aria-hidden="true">
          <defs>
            <linearGradient id="leaf" x1="0" y1="1" x2="1" y2="0">
              <stop offset="0" stopColor="#d8d84a" />
              <stop offset="1" stopColor="#46b878" />
            </linearGradient>
            <linearGradient id="wave" x1="0" y1="1" x2="1" y2="0">
              <stop offset="0" stopColor="#2f6fc4" />
              <stop offset="1" stopColor="#58b8e8" />
            </linearGradient>
          </defs>
          <path d="M44 1C24 0 2 10 1 24C1 30 6 31 8 31C4 22 16 8 44 1Z" fill="url(#wave)" />
          <path d="M30 13C18 11 8 20 11 27C14 31 24 29 24 22C22 26 16 27 16 23C16 18 24 15 30 13Z" fill="#4a8fd6" />
          <path d="M32 15C46 15 44 28 34 33C25 38 13 39 3 40C16 37 32 32 34 24C35 20 34 18 32 15Z" fill="url(#leaf)" />
        </svg>
        <div>
          <SiteName>极光下载站</SiteName>
          <SiteUrl>www.xz7.com</SiteUrl>
        </div>
      </SiteMark>
    </App>
  );
}
